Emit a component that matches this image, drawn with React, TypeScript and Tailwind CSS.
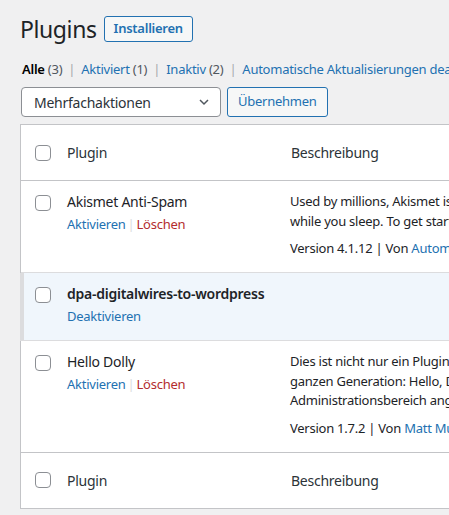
import React from 'react';

type Plugin = {
  name: string;
  active: boolean;
  description: string[];
  version?: string;
  author?: string;
};

const plugins: Plugin[] = [
  {
    name: 'Akismet Anti-Spam',
    active: false,
    description: [
      'Used by millions, Akismet is quite possibly the best way in the world to protect your blog from spam.',
      'while you sleep. To get started: activate the Akismet plugin and then go to your Akismet Settings page.',
    ],
    version: '4.1.12',
    author: 'Automattic',
  },
  {
    name: 'dpa-digitalwires-to-wordpress',
    active: true,
    description: [],
  },
  {
    name: 'Hello Dolly',
    active: false,
    description: [
      'Dies ist nicht nur ein Plugin, es symbolisiert die Hoffnung und den Enthusiasmus einer',
      'ganzen Generation: Hello, Dolly, zusammengefasst in zwei Worten. Wenn es aktiviert ist,',
      'Administrationsbereich angezeigt.',
    ],
    version: '1.7.2',
    author: 'Matt Mullenweg',
  },
];

function Checkbox() {
  return (
    <span className="block w-4 h-4 shrink-0 rounded-[4px] border border-[#8c8f94] bg-white" />
  );
}

function HeadRow({ top }: { top?: boolean }) {
  return (
    <div
      className={`flex items-center h-[56px] ${
        top ? 'border-b border-[#c3c4c7]' : 'border-t border-[#c3c4c7]'
      }`}
    >
      <div className="w-[46px] shrink-0 pl-[14px]">
        <Checkbox />
      </div>
      <div className="w-[224px] shrink-0 text-[14px] text-[#2c3338]">Plugin</div>
      <div className="text-[14px] text-[#2c3338]">Beschreibung</div>
    </div>
  );
}

function PluginRow({ plugin, last }: { plugin: Plugin; last: boolean }) {
  const rowClass = plugin.active
    ? 'bg-[#f0f6fc] -ml-px border-l-4 border-[#72aee6]'
    : 'bg-white';
  return (
    <div
      className={`flex pt-[11px] pb-[14px] ${rowClass} ${
        last ? '' : 'border-b border-[#dcdcde]'
      }`}
    >
      <div
        className={`shrink-0 pt-[3px] ${
          plugin.active ? 'w-[43px] pl-[11px]' : 'w-[46px] pl-[14px]'
        }`}
      >
        <Checkbox />
      </div>
      <div className="w-[223px] shrink-0">
        <div
          className={`text-[14px] leading-[20px] text-[#1d2327] whitespace-nowrap ${
            plugin.active ? 'font-semibold' : ''
          }`}
        >
          {plugin.name}
        </div>
        <div className="text-[13px] leading-[20px] mt-[2px] whitespace-nowrap">
          {plugin.active ? (
            <span className="text-[#2271b1]">Deaktivieren</span>
          ) : (
            <>
              <span className="text-[#2271b1]">Aktivieren</span>
              <span className="text-[#dcdcde] px-[2px]">|</span>
              <span className="text-[#b32d2e]">Löschen</span>
            </>
          )}
        </div>
      </div>
      {plugin.description.length > 0 && (
        <div className="text-[13px] text-[#1d2327] whitespace-nowrap">
          {plugin.description.map((line) => (
            <div key={line} className="leading-[19.5px]">
              {line}
            </div>
          ))}
          <div className="mt-[7px] leading-[20px]">
            Version {plugin.version} | Von{' '}
            <span className="text-[#2271b1]">{plugin.author}</span>
          </div>
        </div>
      )}
    </div>
  );
}

export default function App() {
  return (
    <div
      className="w-[449px] h-[515px] overflow-hidden bg-[#f0f0f1] text-[#1d2327] tracking-[-0.25px]"
      style={{ fontFamily: '"Noto Sans", "Open Sans", sans-serif' }}
    >
      <div className="w-[760px] pl-[20px] pt-[13px]">
        {/* Kopfzeile */}
        <div className="flex items-center gap-[7px]">
          <h1 className="text-[23px] leading-[32px] font-normal text-[#1d2327] tracking-[-0.4px]">
            Plugins
          </h1>
          <button
            type="button"
            className="h-[26px] px-[9px] rounded-[3px] border border-[#2271b1] bg-[#f6f7f7] text-[13px] font-semibold text-[#2271b1]"
          >
            Installieren
          </button>
        </div>

        {/* Filter */}
        <div className="mt-[14px] ml-[2px] text-[13px] leading-[20px] whitespace-nowrap text-[#50575e]">
          <span className="font-semibold text-black">Alle</span> (3)
          <span className="text-[#a7aaad] px-[6px]">|</span>
          <span className="text-[#2271b1]">Aktiviert</span> (1)
          <span className="text-[#a7aaad] px-[6px]">|</span>
          <span className="text-[#2271b1]">Inaktiv</span> (2)
          <span className="text-[#a7aaad] px-[6px]">|</span>
          <span className="text-[#2271b1]">Automatische Aktualisierungen deaktiviert</span> (3)
        </div>

        {/* Mehrfachaktionen */}
        <div className="flex gap-[6px] mt-[8px] ml-px">
          <div className="flex items-center justify-between w-[200px] h-[30px] rounded-[4px] border border-[#8c8f94] bg-white pl-[12px] pr-[8px] text-[14px] text-[#2c3338]">
            <span>Mehrfachaktionen</span>
            <svg width="16" height="16" viewBox="0 0 16 16" fill="none">
              <path d="M4 6l4 4 4-4" stroke="#50575e" strokeWidth="1.5" />
            </svg>
          </div>
          <button
            type="button"
            className="h-[30px] px-[10px] rounded-[3px] border border-[#2271b1] bg-[#f6f7f7] text-[13px] text-[#2271b1]"
          >
            Übernehmen
          </button>
        </div>

        {/* Tabelle */}
        <div className="mt-[7px] border border-[#c3c4c7] bg-white">
          <HeadRow top />
          {plugins.map((p, i) => (
            <PluginRow key={p.name} plugin={p} last={i === plugins.length - 1} />
          ))}
          <HeadRow />
        </div>
      </div>
    </div>
  );
}
